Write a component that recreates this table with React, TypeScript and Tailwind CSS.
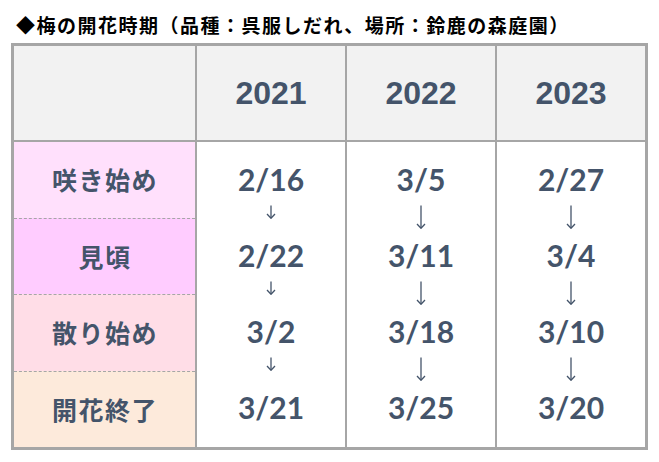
const years = [
  { year: "2021", dates: ["2/16", "2/22", "3/2", "3/21"], long: false },
  { year: "2022", dates: ["3/5", "3/11", "3/18", "3/25"], long: true },
  { year: "2023", dates: ["2/27", "3/4", "3/10", "3/20"], long: true },
];

const stages = [
  { label: "咲き始め", bg: "bg-[#ffe0fc]" },
  { label: "見頃", bg: "bg-[#ffccff]" },
  { label: "散り始め", bg: "bg-[#ffdde7]" },
  { label: "開花終了", bg: "bg-[#fdeadb]" },
];

const jp = { fontFamily: '"Noto Sans CJK JP", "Noto Sans", sans-serif' };
const num = { fontFamily: 'Lato, "Noto Sans", sans-serif' };

function DownArrow({ long }: { long: boolean }) {
  const h = long ? 24 : 14;
  return (
    <svg width="10" height={h} viewBox={`0 0 10 ${h}`} fill="none" stroke="#44546a" strokeWidth="1.3">
      <path d={`M5 0.5V${h - 1}`} />
      <path d={`M1 ${h - 5}L5 ${h - 0.8}L9 ${h - 5}`} strokeLinejoin="round" />
    </svg>
  );
}

function YearColumn({ dates, long }: { dates: string[]; long: boolean }) {
  return (
    <div className="flex flex-col pt-[13px] bg-white text-[#44546a]">
      {dates.map((d, i) => (
        <div key={d} className="flex flex-col">
          <div className="h-[48px] flex items-center justify-center text-[30px] font-bold leading-none" style={num}>
            {d}
          </div>
          {i < dates.length - 1 && (
            <div className="h-[28px] flex justify-center pt-[2px]">
              <DownArrow long={long} />
            </div>
          )}
        </div>
      ))}
    </div>
  );
}

export default function App() {
  return (
    <div className="w-[659px] h-[462px] bg-white">
      <div
        className="pl-[16px] pt-[12px] h-[43px] text-[19px] font-bold leading-[25px] tracking-[1.5px] text-black"
        style={jp}
      >
        ◆梅の開花時期（品種：呉服しだれ、場所：鈴鹿の森庭園）
      </div>
      <div className="ml-[11px] w-[637px] border-[3px] border-[#a6a6a6] bg-[#a6a6a6]">
        <div className="grid grid-cols-[181px_148px_148px_148px] gap-x-[2px] gap-y-[2px]">
          <div className="h-[94px] bg-[#f2f2f2]" />
          {years.map((y) => (
            <div
              key={y.year}
              className="h-[94px] bg-[#f2f2f2] flex items-center justify-center text-[32px] font-bold text-[#44546a]"
              style={{ fontFamily: '"Liberation Sans", Arial, sans-serif' }}
            >
              {y.year}
            </div>
          ))}
          <div className="h-[305px] flex flex-col">
            {stages.map((s, i) => (
              <div
                key={s.label}
                className={`flex-1 flex items-center justify-center ${s.bg} ${
                  i > 0 ? "border-t border-dashed border-[#a6a6a6]" : ""
                } text-[25px] font-bold tracking-[1.5px] pl-[1px] text-[#44546a]`}
                style={jp}
              >
                {s.label}
              </div>
            ))}
          </div>
          {years.map((y) => (
            <YearColumn key={y.year} dates={y.dates} long={y.long} />
          ))}
        </div>
      </div>
    </div>
  );
}
